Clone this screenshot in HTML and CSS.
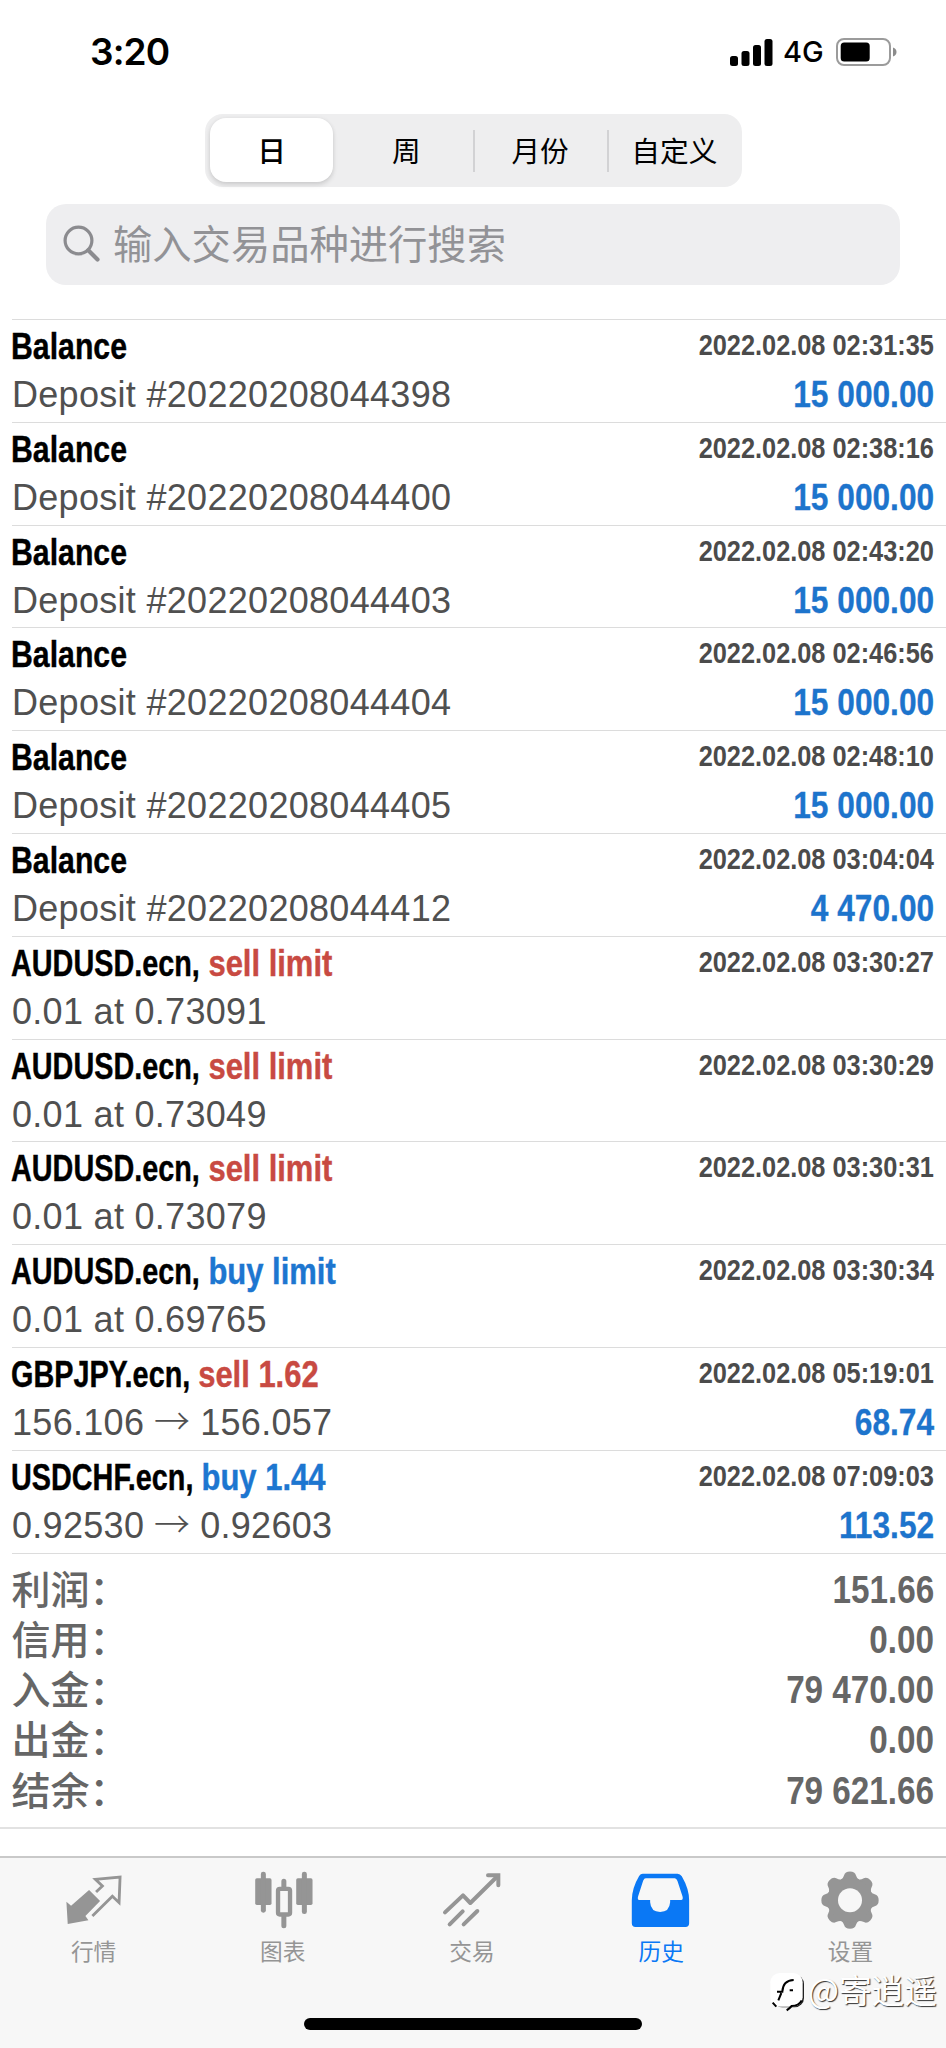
FILE: index.html
```html
<!DOCTYPE html>
<html lang="zh-CN">
<head>
<meta charset="utf-8">
<title>历史</title>
<link rel="stylesheet" href="styles.css">
</head>
<body>
<div class="screen">
  <header class="status">
    <span class="clock">3:20</span>
    <div class="status-right">
      <svg class="signal" viewBox="0 0 43 27"><rect x="0" y="17" width="8" height="10" rx="2.5"/><rect x="11.5" y="12" width="8" height="15" rx="2.5"/><rect x="23" y="6" width="8" height="21" rx="2.5"/><rect x="34.5" y="0" width="8" height="27" rx="2.5"/></svg>
      <span class="net">4G</span>
      <svg class="battery" viewBox="0 0 62 28"><rect x="1" y="1" width="53" height="26" rx="7" fill="none" stroke="#9b9b9b" stroke-width="2"/><rect x="4.7" y="4.5" width="29" height="19" rx="3.5"/><path d="M57 9.5q3.5 1.2 3.5 4.5t-3.5 4.500z" fill="#8c8c8c"/></svg>
    </div>
  </header>

  <nav class="segments">
    <span class="segment selected">日</span>
    <span class="segment">周</span>
    <span class="segment divided">月份</span>
    <span class="segment divided">自定义</span>
  </nav>

  <div class="search">
    <svg class="lens" viewBox="0 0 37 38"><circle cx="15.500" cy="15.500" r="13.400" fill="none" stroke="#8b8b8f" stroke-width="3.200"/><path d="M25.300 25.300L34.500 34.500" stroke="#8b8b8f" stroke-width="4.200" stroke-linecap="round"/></svg>
    <span>输入交易品种进行搜索</span>
  </div>

  <main class="deals">
    <div class="deal"><span class="title plain">Balance</span><span class="date">2022.02.08 02:31:35</span><span class="detail">Deposit #20220208044398</span><span class="amount">15 000.00</span></div>
    <div class="deal"><span class="title plain">Balance</span><span class="date">2022.02.08 02:38:16</span><span class="detail">Deposit #20220208044400</span><span class="amount">15 000.00</span></div>
    <div class="deal"><span class="title plain">Balance</span><span class="date">2022.02.08 02:43:20</span><span class="detail">Deposit #20220208044403</span><span class="amount">15 000.00</span></div>
    <div class="deal"><span class="title plain">Balance</span><span class="date">2022.02.08 02:46:56</span><span class="detail">Deposit #20220208044404</span><span class="amount">15 000.00</span></div>
    <div class="deal"><span class="title plain">Balance</span><span class="date">2022.02.08 02:48:10</span><span class="detail">Deposit #20220208044405</span><span class="amount">15 000.00</span></div>
    <div class="deal"><span class="title plain">Balance</span><span class="date">2022.02.08 03:04:04</span><span class="detail">Deposit #20220208044412</span><span class="amount">4 470.00</span></div>
    <div class="deal"><span class="title"><span class="symbol">AUDUSD.ecn,</span> <span class="sell">sell limit</span></span><span class="date">2022.02.08 03:30:27</span><span class="detail">0.01 at 0.73091</span></div>
    <div class="deal"><span class="title"><span class="symbol">AUDUSD.ecn,</span> <span class="sell">sell limit</span></span><span class="date">2022.02.08 03:30:29</span><span class="detail">0.01 at 0.73049</span></div>
    <div class="deal"><span class="title"><span class="symbol">AUDUSD.ecn,</span> <span class="sell">sell limit</span></span><span class="date">2022.02.08 03:30:31</span><span class="detail">0.01 at 0.73079</span></div>
    <div class="deal"><span class="title"><span class="symbol">AUDUSD.ecn,</span> <span class="buy">buy limit</span></span><span class="date">2022.02.08 03:30:34</span><span class="detail">0.01 at 0.69765</span></div>
    <div class="deal"><span class="title"><span class="symbol">GBPJPY.ecn,</span> <span class="sell">sell 1.62</span></span><span class="date">2022.02.08 05:19:01</span><span class="detail">156.106 <span class="arrow">→</span> 156.057</span><span class="amount">68.74</span></div>
    <div class="deal"><span class="title"><span class="symbol">USDCHF.ecn,</span> <span class="buy">buy 1.44</span></span><span class="date">2022.02.08 07:09:03</span><span class="detail">0.92530 <span class="arrow">→</span> 0.92603</span><span class="amount">113.52</span></div>
  </main>

  <section class="summary">
    <div class="total"><span>利润：</span><b>151.66</b></div>
    <div class="total"><span>信用：</span><b>0.00</b></div>
    <div class="total"><span>入金：</span><b>79 470.00</b></div>
    <div class="total"><span>出金：</span><b>0.00</b></div>
    <div class="total"><span>结余：</span><b>79 621.66</b></div>
  </section>

  <footer class="tabbar">
    <div class="tab">
      <svg viewBox="187.800 87 192 192"><path d="M266 153L299 186L255 231L264 244L202 255L198 188L212 200Z" fill="currentColor"/><path d="M287 159L306 141L285 121L359 114L356 191L336 172L276 231" fill="none" stroke="currentColor" stroke-width="8.500"/></svg>
      <span>行情</span>
    </div>
    <div class="tab">
      <svg viewBox="755.400 87 192 192" fill="currentColor"><rect x="765" y="118" width="49" height="80" rx="5"/><rect x="782" y="98" width="15" height="123" rx="7"/><rect x="888" y="118" width="49" height="80" rx="5"/><rect x="905" y="98" width="15" height="127" rx="7"/><path d="M851 127V150M851 226V260" stroke="currentColor" stroke-width="15" stroke-linecap="round"/><rect x="833.500" y="149.500" width="36" height="77" rx="5" fill="#f7f7f7" stroke="currentColor" stroke-width="13"/></svg>
      <span>图表</span>
    </div>
    <div class="tab">
      <svg viewBox="33 21 192 192" fill="none" stroke="currentColor" stroke-width="12" stroke-linecap="round" stroke-linejoin="round"><path d="M45 154L99 103L121 126L203 45"/><path d="M174 43H205V73" stroke-linejoin="miter"/><path d="M59 190L98 151M101 190L142 150"/></svg>
      <span>交易</span>
    </div>
    <div class="tab active">
      <svg viewBox="471.600 87 192 192"><path fill="currentColor" fill-rule="evenodd" d="M510 104H614Q622 104 627 112Q649 150 649 184V253Q649 264 638 264H488Q477 264 477 253V184Q477 148 499 111Q503 104 510 104ZM519 118Q514 118 511 125L496 172Q493 183 499 183H532V190Q534 219 562 219Q590 219 592 190V183H625Q632 183 629 172L614 126Q611 118 606 118Z"/></svg>
      <span>历史</span>
    </div>
    <div class="tab">
      <svg viewBox="-93 -96.500 192 192"><g fill="currentColor"><path id="teeth" d="M-27 -62Q-20 -66 -18 -74Q-15 -86 0 -86T18 -74Q20 -66 27 -62V62Q20 66 18 74Q15 86 0 86T-18 74Q-20 66 -27 62Z"/><use href="#teeth" transform="rotate(45)"/><use href="#teeth" transform="rotate(90)"/><use href="#teeth" transform="rotate(135)"/><circle r="66"/></g><circle r="36" fill="#f7f7f7"/></svg>
      <span>设置</span>
    </div>
    <div class="home"></div>
    <div class="credit">
      <svg viewBox="20 30 108 126"><rect x="32" y="41" width="93" height="98" rx="28" fill="#222"/><rect x="24" y="36" width="97" height="101" rx="28" fill="#fff"/><path d="M44 92H60Q62 58 94 57M82 88H92M57 96L48 118M31 125L42 137M118 118Q110 134 88 135Q83 141 73 148" fill="none" stroke="#000" stroke-width="6"/></svg>
      <span>@寄逍遥</span>
    </div>
  </footer>
</div>
</body>
</html>
```
FILE: styles.css
```css
* { box-sizing: border-box; }
body {
  margin: 0;
  background: #fff;
  color: #000;
  font-family: "Liberation Sans", "Noto Sans CJK SC", sans-serif;
}
.screen {
  width: 946px;
  height: 2048px;
  display: flex;
  flex-direction: column;
  overflow: hidden;
}
.status {
  height: 114px;
  padding: 0 49px 10px 90px;
  display: flex;
  justify-content: space-between;
  align-items: center;
  font-family: Inter, sans-serif;
}
.clock { font-size: 37px; font-weight: 600; line-height: 40px; letter-spacing: -0.9px; }
.status-right { display: flex; align-items: center; }
.signal { width: 43px; height: 27px; }
.net { margin-left: 10px; width: 42px; font-size: 29px; line-height: 32px; font-weight: 500; }
.battery { width: 62px; height: 28px; margin-left: 11px; margin-right: -1px; }

.segments {
  width: 537px;
  height: 73px;
  margin-left: 205px;
  border-radius: 18px;
  background: #eeeeef;
  display: grid;
  grid-template-columns: repeat(4, 1fr);
  font: 28.7px/71px "Noto Sans CJK SC", sans-serif;
}
.segment { text-align: center; position: relative; }
.selected {
  margin: 4px 6px 5px 5px;
  line-height: 63px;
  border-radius: 16px;
  background: #fff;
  font-weight: 500;
  box-shadow: 0 3px 5px #0000001f, 0 0 4px #0000000f;
}
.divided { padding-right: 1px; }
.divided::before {
  content: "";
  position: absolute;
  left: -1px;
  top: 16px;
  width: 2px;
  height: 42px;
  background: #d2d2d4;
}

.search {
  width: 854px;
  height: 81px;
  margin: 17px 0 34px 46px;
  padding: 0 0 5px 17px;
  border-radius: 20px;
  background: #eeeef0;
  color: #929296;
  display: flex;
  align-items: center;
  font: 39.3px/74px "Noto Sans CJK SC", sans-serif;
}
.lens { width: 37px; height: 38px; margin: 4px 13px 0 0; }

.deals { margin-left: 12px; border-bottom: 1.5px solid #dcdcdc; }
.deal {
  height: 102.8px;
  padding-right: 12px;
  border-top: 1.500px solid #dcdcdc;
  display: grid;
  grid-template-columns: 1fr auto;
  grid-template-rows: 53px 43px;
  white-space: nowrap;
}
.title, .date, .amount { font-weight: 700; }
.title {
  justify-self: start;
  margin-left: -1px;
  font-size: 36px;
  line-height: 53px;
  transform: scaleX(0.86);
  transform-origin: left;
  -webkit-text-stroke: 0.4px currentColor;
}
.plain { transform: scaleX(0.84); }
.symbol {
  display: inline-block;
  margin-right: -16.5px;
  transform: scaleX(0.93);
  transform-origin: left;
}
.date {
  color: #4b4b4b;
  font-size: 29.5px;
  line-height: 50px;
  transform: scaleX(0.859);
  transform-origin: right;
}
.detail {
  color: #505050;
  font-size: 36px;
  line-height: 43px;
  letter-spacing: 0.3px;
}
.arrow { font-family: "Noto Sans CJK SC", sans-serif; font-weight: 300; line-height: 1; margin: 0 -0.5px; }
.amount {
  justify-self: end;
  color: #1d74cc;
  font-size: 36px;
  line-height: 43px;
  transform: scaleX(0.88);
  transform-origin: right;
  -webkit-text-stroke: 0.3px currentColor;
}
.sell { color: #c84a42; }
.buy { color: #1d76d0; }

.summary {
  height: 275px;
  padding: 11px 12px 0;
  border-bottom: 2px solid #e2e2e2;
  margin-bottom: 27.5px;
  color: #666;
}
.total {
  height: 50.3px;
  display: flex;
  justify-content: space-between;
  line-height: 50.3px;
}
.total span { margin: -3px 0 0 -0.5px; font: 500 39px/50.3px "Noto Sans CJK SC", sans-serif; }
.total b { font-size: 38px; transform: scaleX(0.875); transform-origin: right; }

.tabbar {
  position: relative;
  flex: 1;
  border-top: 2px solid #c9c9c9;
  background: #f7f7f7;
  display: grid;
  grid-template-columns: repeat(5, 1fr);
  color: #959595;
}
.tab {
  padding-top: 10px;
  display: flex;
  flex-direction: column;
  align-items: center;
  font: 22.7px/34px "Noto Sans CJK SC", sans-serif;
}
.tab svg { width: 64px; height: 64px; margin-bottom: 2px; }
.tab span { padding-right: 2px; }
.active { color: #0a78f5; }
.home {
  position: absolute;
  left: 304px;
  bottom: 18px;
  width: 338px;
  height: 12px;
  border-radius: 6px;
  background: #000;
}
.credit {
  position: absolute;
  right: 9px;
  bottom: 35px;
  display: flex;
  align-items: center;
  color: #fff;
  font: 32.7px/42px "Noto Sans CJK SC", sans-serif;
  text-shadow: 1px 1px 1px #333;
}
.credit svg { width: 36px; height: 42px; margin: 6px 3px 0 0; }
```
